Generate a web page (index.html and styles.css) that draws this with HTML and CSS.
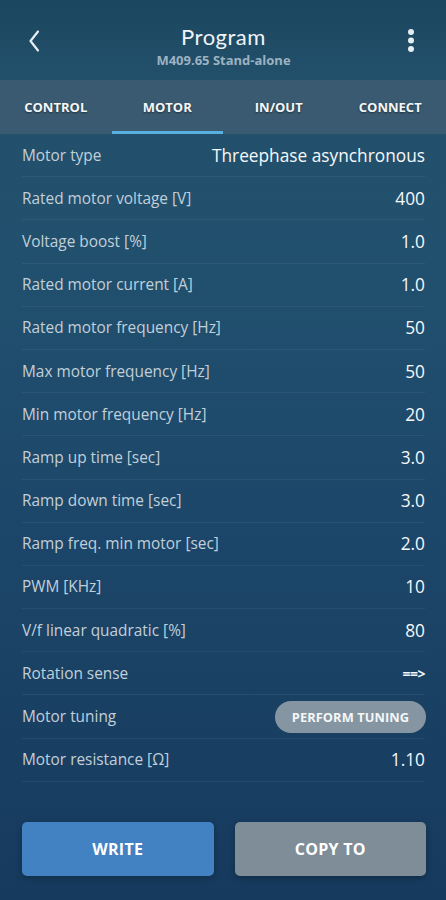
FILE: index.html
```html
<!DOCTYPE html>
<html>
<head>
<meta charset="utf-8">
<link rel="stylesheet" href="styles.css">
</head>
<body>
<div class="screen">
  <header class="appbar">
    <button class="icon-btn back" aria-label="Back">
      <svg width="16" height="24" viewBox="0 0 16 24"><path d="M12 2.5 L4.5 12 L12 21.5" fill="none" stroke="#e6edf2" stroke-width="2.2" stroke-linecap="round" stroke-linejoin="round"/></svg>
    </button>
    <div class="titles">
      <div class="title">Program</div>
      <div class="subtitle">M409.65 Stand-alone</div>
    </div>
    <button class="icon-btn more" aria-label="More">
      <svg width="8" height="26" viewBox="0 0 8 26"><circle cx="4" cy="4" r="3" fill="#e6edf2"/><circle cx="4" cy="12.5" r="3" fill="#e6edf2"/><circle cx="4" cy="21" r="3" fill="#e6edf2"/></svg>
    </button>
  </header>
  <nav class="tabs">
    <div class="tab">CONTROL</div>
    <div class="tab active">MOTOR</div>
    <div class="tab">IN/OUT</div>
    <div class="tab">CONNECT</div>
  </nav>
  <main class="list">
    <div class="row"><span class="label">Motor type</span><span class="value">Threephase asynchronous</span></div>
    <div class="row"><span class="label">Rated motor voltage [V]</span><span class="value">400</span></div>
    <div class="row"><span class="label">Voltage boost [%]</span><span class="value">1.0</span></div>
    <div class="row"><span class="label">Rated motor current [A]</span><span class="value">1.0</span></div>
    <div class="row"><span class="label">Rated motor frequency [Hz]</span><span class="value">50</span></div>
    <div class="row"><span class="label">Max motor frequency [Hz]</span><span class="value">50</span></div>
    <div class="row"><span class="label">Min motor frequency [Hz]</span><span class="value">20</span></div>
    <div class="row"><span class="label">Ramp up time [sec]</span><span class="value">3.0</span></div>
    <div class="row"><span class="label">Ramp down time [sec]</span><span class="value">3.0</span></div>
    <div class="row"><span class="label">Ramp freq. min motor [sec]</span><span class="value">2.0</span></div>
    <div class="row"><span class="label">PWM [KHz]</span><span class="value">10</span></div>
    <div class="row"><span class="label">V/f linear quadratic [%]</span><span class="value">80</span></div>
    <div class="row"><span class="label">Rotation sense</span><span class="value small">==&gt;</span></div>
    <div class="row"><span class="label">Motor tuning</span><button class="pill">PERFORM TUNING</button></div>
    <div class="row"><span class="label">Motor resistance [Ω]</span><span class="value">1.10</span></div>
  </main>
  <footer class="actions">
    <button class="btn primary">WRITE</button>
    <button class="btn secondary">COPY TO</button>
  </footer>
</div>
</body>
</html>
```
FILE: styles.css
```css
* { box-sizing: border-box; }
html, body { margin: 0; padding: 0; }
body {
  width: 446px;
  height: 900px;
  overflow: hidden;
  font-family: "Open Sans", "Noto Sans", sans-serif;
  color: #fff;
}
.screen {
  width: 446px;
  height: 900px;
  display: flex;
  flex-direction: column;
  background: linear-gradient(180deg, #24516a 0%, #21506e 30%, #1c4669 60%, #163a5d 100%);
}
button { font-family: inherit; border: none; cursor: pointer; }
.appbar {
  height: 80px;
  display: flex;
  align-items: center;
  justify-content: space-between;
  padding: 12px 25px 0 24px;
  background: linear-gradient(180deg, #1c4660 0%, #22506a 100%);
}
.icon-btn {
  background: none;
  padding: 0;
  width: 20px;
  display: flex;
  align-items: center;
  justify-content: center;
  margin-top: -10px;
}
.titles {
  display: flex;
  flex-direction: column;
  align-items: center;
  padding-left: 2px;
}
.title {
  font-family: "Lato", "Open Sans", sans-serif;
  font-size: 22px;
  line-height: 26px;
  color: #f0f4f7;
  letter-spacing: 0.5px;
}
.subtitle {
  font-size: 13px;
  font-weight: 700;
  line-height: 18px;
  margin-top: 1px;
  color: #9db2c1;
}
.tabs {
  height: 54px;
  display: grid;
  grid-template-columns: repeat(4, 1fr);
  background: #395a70;
}
.tab {
  display: flex;
  align-items: center;
  justify-content: center;
  font-size: 13px;
  font-weight: 700;
  color: #f4f6f8;
  text-shadow: 0 1px 2px rgba(0,0,0,0.45);
  border-bottom: 3px solid transparent;
  padding-top: 2px;
}
.tab.active { border-bottom-color: #5aaee0; }
.list {
  padding: 0 21px 0 22px;
  display: flex;
  flex-direction: column;
}
.row {
  height: 43.2px;
  display: flex;
  align-items: center;
  justify-content: space-between;
  border-bottom: 1px solid rgba(255,255,255,0.06);
}
.label {
  font-size: 15.4px;
  color: #c2cfd9;
}
.value {
  font-size: 17.3px;
  color: #f6f8fa;
}
.value.small { font-size: 14px; font-weight: 700; letter-spacing: -0.5px; }
.pill {
  height: 32px;
  width: 151px;
  border-radius: 16px;
  background: #8596a2;
  color: #f4f6f8;
  font-size: 12.8px;
  font-weight: 700;
  letter-spacing: 0.1px;
  margin-right: -1px;
}
.actions {
  margin-top: auto;
  display: grid;
  grid-template-columns: 1fr 1fr;
  gap: 21px;
  padding: 0 20px 24px 22px;
}
.btn {
  height: 54px;
  border-radius: 5px;
  color: #fff;
  font-size: 16px;
  font-weight: 700;
  letter-spacing: 0.3px;
  box-shadow: 0 2px 6px rgba(0,0,0,0.25);
}
.primary { background: #4282c3; }
.secondary { background: #7f8d99; }
```
